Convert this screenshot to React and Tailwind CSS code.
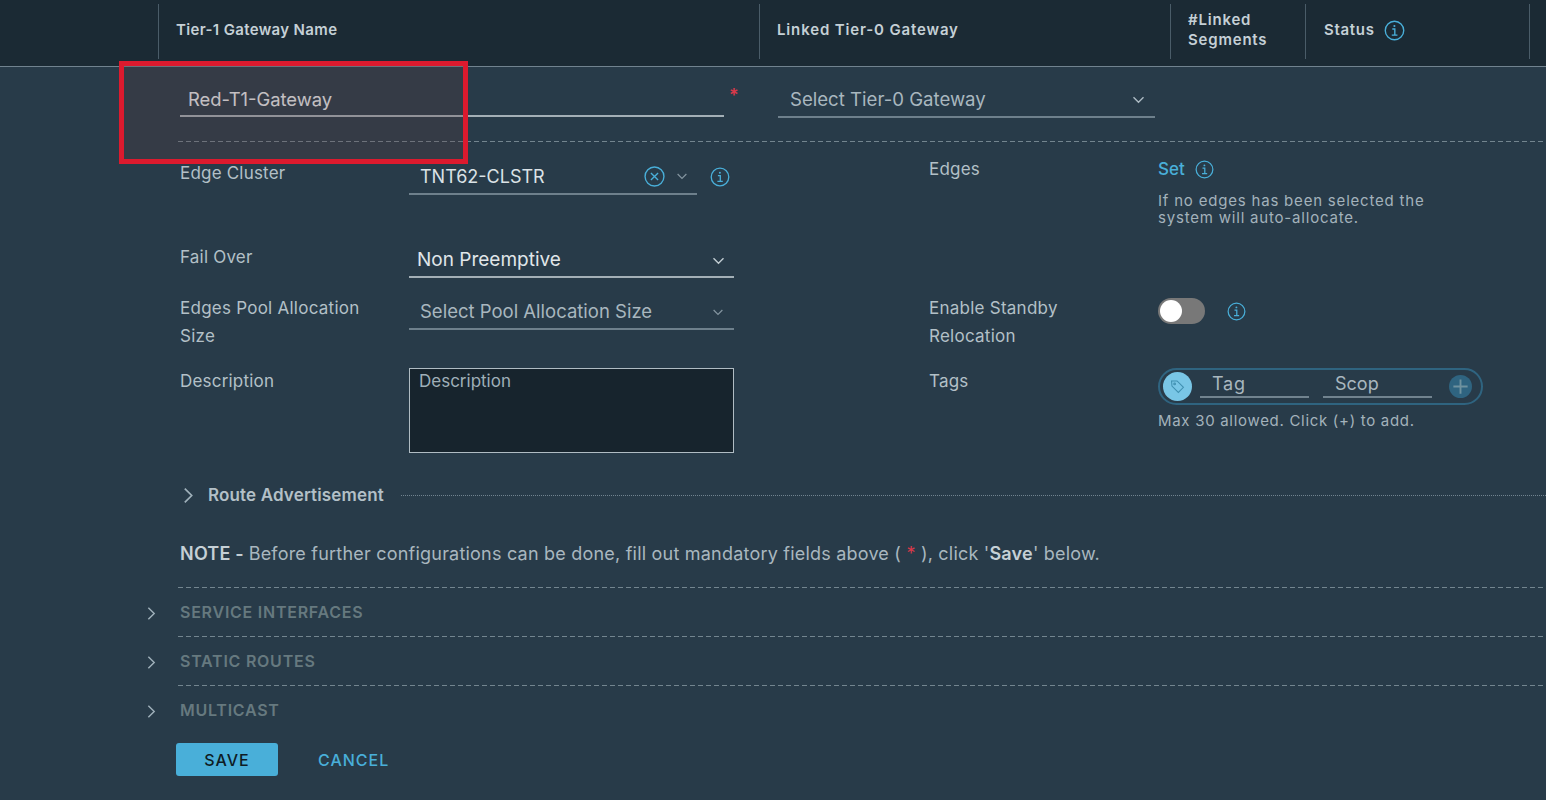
const font = { fontFamily: '"Inter","Noto Sans",sans-serif' };

function Info({ className = "" }) {
  return (
    <svg viewBox="0 0 20 20" fill="none" className={className} stroke="#49afd9" strokeWidth="1.3">
      <circle cx="10" cy="10" r="8.8" />
      <path d="M7.9 8.6h2.4v5.6M7.4 14.4h5.4" />
      <circle cx="9.9" cy="5.7" r="1" fill="#49afd9" stroke="none" />
    </svg>
  );
}

function Chevron({ className = "", color = "#adbbc4" }) {
  return (
    <svg viewBox="0 0 12 8" fill="none" className={className} stroke={color} strokeWidth="1.4">
      <path d="M1 1.2l5 5 5-5" />
    </svg>
  );
}

function ChevronRight({ className = "", color = "#9fb0ba" }) {
  return (
    <svg viewBox="0 0 10 16" fill="none" className={className} stroke={color} strokeWidth="1.6">
      <path d="M1.5 1.5L8 8l-6.5 6.5" />
    </svg>
  );
}

function HeaderCell({ className = "", children }) {
  return (
    <div className={`relative flex h-[60px] items-center text-[15px] font-semibold leading-[20px] text-[#c5d0d6] ${className}`}>
      <span className="absolute left-0 top-[4px] h-[55px] w-px bg-[#4a5c68]" />
      {children}
    </div>
  );
}

function Dash({ className = "" }) {
  return <div className={`h-px bg-[repeating-linear-gradient(90deg,#73858f_0_5px,transparent_5px_8px)] ${className}`} />;
}

function Section({ title }) {
  return (
    <div className="relative ml-[178px] h-[49px]">
      <Dash />
      <ChevronRight className="absolute left-[-31px] top-[19px] h-[15px] w-[9px]" />
      <div className="pl-[2px] pt-[14px] text-[16px] font-semibold leading-[20px] tracking-[0.75px] text-[#66797f]">{title}</div>
    </div>
  );
}

function Row({ h, left, right }) {
  return (
    <div className={`flex ${h}`}>
      <div className="flex w-[929px] shrink-0 pl-[180px]">{left}</div>
      <div className="flex flex-1">{right}</div>
    </div>
  );
}

export default function App() {
  return (
    <div style={font} className="relative h-[800px] w-[1546px] overflow-hidden bg-[#283b49]">
      <div className="flex h-[67px] border-b border-[#71838f] bg-[#1b2a34] pl-[158px]">
        <HeaderCell className="w-[601px] pl-[18px] tracking-[0.35px]">Tier-1 Gateway Name</HeaderCell>
        <HeaderCell className="w-[411px] pl-[18px] tracking-[0.85px]">Linked Tier-0 Gateway</HeaderCell>
        <HeaderCell className="w-[135px] pl-[18px] tracking-[0.8px]"><span>#Linked<br />Segments</span></HeaderCell>
        <HeaderCell className="w-[224px] pl-[19px] tracking-[0.7px]">
          <span>Status</span>
          <Info className="ml-[9px] h-[21px] w-[21px]" />
        </HeaderCell>
        <div className="mt-[4px] h-[55px] w-px bg-[#4a5c68]" />
      </div>

      <div className="flex h-[74px] pl-[180px]">
        <div className="mt-[17px] flex h-[33px] w-[544px] items-center border-b-2 border-[#a3afb6] pl-[8px] text-[18.4px] text-[#e6ebee]">Red-T1-Gateway</div>
        <span className="ml-[5px] mt-[19px] w-[14px] text-[18px] font-semibold leading-[20px] text-[#d8394a]">*</span>
        <div className="ml-[35px] mt-[17px] flex h-[34px] w-[377px] items-center justify-between border-b-2 border-[#6e808c] pl-[12px] pr-[10px] text-[18.6px] text-[#a9b7bf]">
          <span>Select Tier-0 Gateway</span>
          <Chevron className="h-[8px] w-[13px]" />
        </div>
      </div>

      <Dash className="ml-[178px]" />

      <Row
        h="h-[84px]"
        left={
          <>
            <div className="w-[229px] pt-[21px] text-[17px] leading-[20px] tracking-[0.2px] text-[#b3c0c7]">Edge Cluster</div>
            <div className="mt-[17px] flex h-[36px] w-[288px] items-center border-b-2 border-[#6e808c] pl-[11px] text-[18px] text-[#dbe2e6]">
              <span className="flex-1">TNT62-CLSTR</span>
              <svg viewBox="0 0 20 20" fill="none" stroke="#49afd9" strokeWidth="1.3" className="h-[21px] w-[21px]">
                <circle cx="10" cy="10" r="9" />
                <path d="M6.6 6.6l6.8 6.8M13.4 6.6l-6.8 6.8" />
              </svg>
              <Chevron className="ml-[11px] mr-[9px] h-[7px] w-[12px]" color="#83949f" />
            </div>
            <Info className="ml-[13px] mt-[25px] h-[20px] w-[20px]" />
          </>
        }
        right={
          <>
            <div className="w-[229px] pt-[17px] text-[17px] leading-[20px] tracking-[0.2px] text-[#b3c0c7]">Edges</div>
            <div className="pt-[17px]">
              <div className="flex items-center text-[17px] font-medium leading-[20px] text-[#49afd9]">
                Set
                <Info className="ml-[10px] h-[19px] w-[19px]" />
              </div>
              <div className="mt-[13px] w-[300px] text-[15px] leading-[17px] tracking-[0.8px] text-[#a3b2bb]">
                If no edges has been selected the system will auto-allocate.
              </div>
            </div>
          </>
        }
      />

      <Row
        h="h-[51px]"
        left={
          <>
            <div className="w-[229px] pt-[21px] text-[17px] leading-[20px] tracking-[0.2px] text-[#b3c0c7]">Fail Over</div>
            <div className="mt-[17px] flex h-[35px] w-[325px] items-center justify-between border-b-2 border-[#a3afb6] pl-[8px] pr-[9px] pt-[2px] text-[19px] text-[#e0e6e9]">
              <span>Non Preemptive</span>
              <Chevron className="h-[8px] w-[13px]" color="#c1ccd2" />
            </div>
          </>
        }
        right={<div />}
      />

      <Row
        h="h-[72px]"
        left={
          <>
            <div className="w-[229px] pt-[17px] text-[17px] leading-[28px] tracking-[0.25px] text-[#b3c0c7]">Edges Pool Allocation<br />Size</div>
            <div className="mt-[19px] flex h-[34px] w-[325px] items-center justify-between border-b-2 border-[#6e808c] pl-[11px] pr-[10px] text-[18.5px] text-[#a9b7bf]">
              <span>Select Pool Allocation Size</span>
              <Chevron className="h-[7px] w-[12px]" color="#83949f" />
            </div>
          </>
        }
        right={
          <>
            <div className="w-[229px] pt-[17px] text-[17px] leading-[28px] tracking-[0.25px] text-[#b3c0c7]">Enable Standby<br />Relocation</div>
            <div className="relative mt-[21px] h-[26px] w-[47px] rounded-full bg-[#787878]">
              <span className="absolute left-[2px] top-[2px] h-[22px] w-[22px] rounded-full bg-white" />
            </div>
            <Info className="ml-[22px] mt-[25px] h-[19px] w-[19px]" />
          </>
        }
      />

      <Row
        h="h-[122px]"
        left={
          <>
            <div className="w-[229px] pt-[22px] text-[17px] leading-[20px] tracking-[0.2px] text-[#b3c0c7]">Description</div>
            <div className="mt-[19px] h-[85px] w-[325px] border border-[#b0bcc3] bg-[#17242d] px-[9px] py-[2px] text-[17px] leading-[20px] text-[#9fafb8]">Description</div>
          </>
        }
        right={
          <>
            <div className="w-[229px] pt-[22px] text-[17px] leading-[20px] tracking-[0.2px] text-[#b3c0c7]">Tags</div>
            <div className="pt-[19px]">
              <div className="flex h-[37px] w-[325px] items-center rounded-full border-2 border-[#2f6480] pl-[3px]">
                <span className="flex h-[29px] w-[29px] shrink-0 items-center justify-center rounded-full bg-[#79c6e6]">
                  <svg viewBox="0 0 20 20" fill="none" stroke="#3f8fb0" strokeWidth="1.2" className="h-[17px] w-[17px]">
                    <path d="M3 3.5h6.5l7.5 7.5-6 6-7.5-7.5z" />
                    <circle cx="6.6" cy="7" r="1" />
                  </svg>
                </span>
                <div className="ml-[8px] mb-[2px] h-[25px] w-[109px] border-b-2 border-[#71838f] pl-[12px] text-[18px] leading-[22px] tracking-[0.8px] text-[#a9b7bf]">Tag</div>
                <div className="ml-[14px] mb-[2px] h-[25px] w-[109px] border-b-2 border-[#71838f] pl-[12px] text-[18px] leading-[22px] text-[#a9b7bf]">Scop</div>
                <span className="ml-[17px] flex h-[23px] w-[23px] items-center justify-center rounded-full bg-[#2f6480]">
                  <svg viewBox="0 0 20 20" fill="none" stroke="#6f929f" strokeWidth="2" className="h-[19px] w-[19px]">
                    <path d="M10 2.5v15M2.5 10h15" />
                  </svg>
                </span>
              </div>
              <div className="mt-[7px] text-[15px] leading-[18px] tracking-[0.7px] text-[#a3b2bb]">Max 30 allowed. Click (+) to add.</div>
            </div>
          </>
        }
      />

      <div className="flex h-[48px] items-center pl-[183px] pt-[1px]">
        <ChevronRight className="h-[17px] w-[11px]" />
        <span className="ml-[14px] text-[17px] font-semibold tracking-[0.15px] text-[#b3c0c7]">Route Advertisement</span>
        <div className="ml-[17px] flex-1 border-t border-dotted border-[#71838f]" />
      </div>

      <div className="h-[68px] pl-[180px] pt-[23px] text-[18px] leading-[24px] tracking-[0.21px] text-[#a9b7bf]">
        <b className="font-semibold text-[#c5d0d6]">NOTE - </b>
        Before further configurations can be done, fill out mandatory fields above ( <span className="text-[#d8394a]">*</span> ), click '<b className="font-semibold text-[#c5d0d6]">Save</b>' below.
      </div>

      <Section title="SERVICE INTERFACES" />
      <Section title="STATIC ROUTES" />
      <Section title="MULTICAST" />

      <div className="flex items-center pl-[176px] pt-[9px]">
        <button className="h-[33px] w-[102px] rounded-[3px] bg-[#49afd9] text-[16px] font-medium tracking-[1px] text-[#0f1c24]">SAVE</button>
        <button className="ml-[40px] text-[16px] font-medium tracking-[1px] text-[#49afd9]">CANCEL</button>
      </div>

      <div className="absolute left-[119px] top-[61px] h-[103px] w-[349px] border-[5px] border-[#dc1a2e] bg-[#5a3a40]/25" />
    </div>
  );
}
